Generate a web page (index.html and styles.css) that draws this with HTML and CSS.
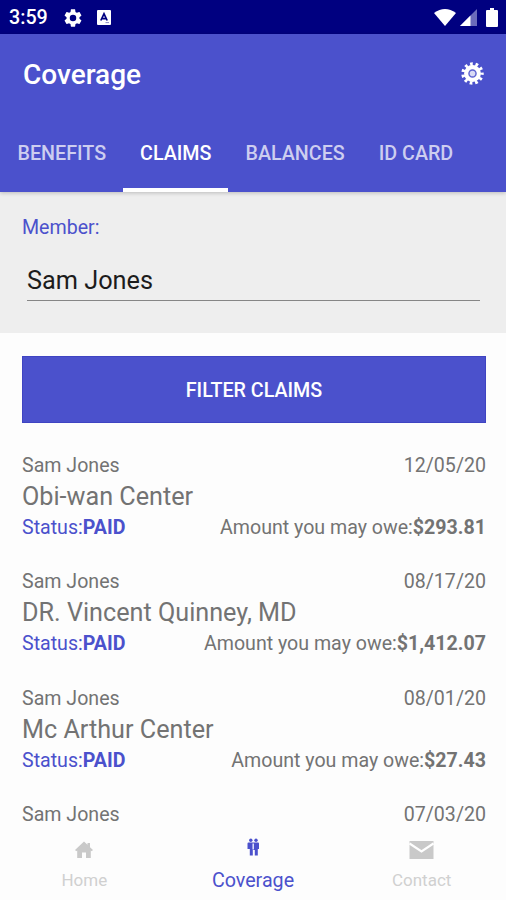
FILE: index.html
```html
<!DOCTYPE html>
<html lang="en">
<head>
<meta charset="utf-8">
<title>Coverage</title>
<link rel="stylesheet" href="styles.css">
</head>
<body>
<div class="app">
  <div class="status-bar">
    <span class="clock">3:59</span>
    <svg class="status-gear" viewBox="2 2 20 20"><path d="M19.14 12.94c.04-.3.06-.61.06-.94s-.02-.64-.07-.94l2.03-1.58c.18-.14.23-.41.12-.61l-1.92-3.32c-.12-.22-.37-.29-.59-.22l-2.39.96c-.5-.38-1.03-.7-1.62-.94l-.36-2.54c-.04-.24-.24-.41-.48-.41h-3.84c-.24 0-.43.17-.47.41l-.36 2.54c-.59.24-1.13.57-1.62.94l-2.39-.96c-.22-.08-.47 0-.59.22L2.74 8.87c-.12.21-.08.47.12.61l2.03 1.58c-.05.3-.09.63-.09.94s.02.64.07.94l-2.03 1.58c-.18.14-.23.41-.12.61l1.92 3.32c.12.22.37.29.59.22l2.39-.96c.5.38 1.03.7 1.62.94l.36 2.54c.05.24.24.41.48.41h3.84c.24 0 .44-.17.47-.41l.36-2.54c.59-.24 1.13-.56 1.62-.94l2.39.96c.22.08.47 0 .59-.22l1.92-3.32c.12-.22.07-.47-.12-.61zM12 15.6A3.6 3.6 0 1 1 12 8.4a3.6 3.6 0 0 1 0 7.2z" fill="#fff"/></svg>
    <svg class="status-app" viewBox="0 0 14 15"><rect width="14" height="15" rx="1" fill="#fff"/><path d="M3.8 10.5 7 3.8l3.2 6.7M5 8.6h4" fill="none" stroke="#000080" stroke-width="1.7"/><path d="M8.5 12.6h3.5" stroke="#8989c4" stroke-width="1"/></svg>
    <div class="signals">
      <svg class="wifi" viewBox="0 0 22 17"><path d="M0 4Q11-4 22 4L11 17Z" fill="#fff"/></svg>
      <svg class="cell" viewBox="0 0 17 17"><path d="M17 0v17H0Z" fill="#6b6bbb"/><path d="M10.500 6.500V17H0Z" fill="#fff"/></svg>
      <svg class="battery" viewBox="0 0 12 19"><path d="M4 0h4v2h3q1 0 1 1v15q0 1-1 1H1q-1 0-1-1V3q0-1 1-1h3Z" fill="#fff"/></svg>
    </div>
  </div>
  <header class="header">
    <div class="toolbar">
      <h1 class="title">Coverage</h1>
      <svg class="settings" viewBox="-12 -12 24 24">
        <circle r="8.800" fill="#fff"/>
        <circle r="9.900" fill="none" stroke="#fff" stroke-width="3.600" stroke-dasharray="2.800 2.855" stroke-dashoffset="1.400"/>
        <circle r="3.700" fill="#d9daf5" stroke="#5d62d1" stroke-width="1.500"/>
      </svg>
    </div>
    <nav class="tabs">
      <div class="tab">BENEFITS</div>
      <div class="tab tab-active">CLAIMS</div>
      <div class="tab">BALANCES</div>
      <div class="tab">ID CARD</div>
    </nav>
  </header>
  <section class="member">
    <div class="member-label">Member:</div>
    <div class="member-field">Sam Jones</div>
  </section>
  <main class="content">
    <div class="filter">FILTER CLAIMS</div>
    <div class="claim">
      <div class="row"><span>Sam Jones</span><span class="date">12/05/20</span></div>
      <div class="provider">Obi-wan Center</div>
      <div class="row"><span class="status">Status:<b>PAID</b></span><span class="amount">Amount you may owe:<b>$293.81</b></span></div>
    </div>
    <div class="claim">
      <div class="row"><span>Sam Jones</span><span class="date">08/17/20</span></div>
      <div class="provider">DR. Vincent Quinney, MD</div>
      <div class="row"><span class="status">Status:<b>PAID</b></span><span class="amount">Amount you may owe:<b>$1,412.07</b></span></div>
    </div>
    <div class="claim">
      <div class="row"><span>Sam Jones</span><span class="date">08/01/20</span></div>
      <div class="provider">Mc Arthur Center</div>
      <div class="row"><span class="status">Status:<b>PAID</b></span><span class="amount">Amount you may owe:<b>$27.43</b></span></div>
    </div>
    <div class="claim">
      <div class="row"><span>Sam Jones</span><span class="date">07/03/20</span></div>
    </div>
  </main>
  <nav class="bottom-nav">
    <div class="nav-item">
      <svg class="nav-icon" viewBox="0 0 24 24"><path d="M3 12 12 3.500 15.500 6.800V5H18v4.200L21 12l-1.300 1.200-.9-.8V20H14v-5.500h-4V20H5.200v-7.600l-.9.800Z" fill="#c9c9c9"/></svg>
      <span class="nav-label">Home</span>
    </div>
    <div class="nav-item nav-active">
      <svg class="nav-icon" viewBox="0 0 24 24"><g fill="#4b51cc"><circle cx="9.800" cy="2.200" r="1.700"/><circle cx="15" cy="2.200" r="1.700"/><path d="M7.500 4.500h9.500q1 0 1 1V11h-1.200v6.500h-3V12h-2v5.500h-3V11H6.500V5.500q0-1 1-1Z"/></g><path d="M12.200 5.500v6" stroke="#e4e5fb" stroke-width="1.500"/></svg>
      <span class="nav-label">Coverage</span>
    </div>
    <div class="nav-item">
      <svg class="nav-icon nav-mail" viewBox="0 0 25 24"><path d="M.5 3h24v18H.5Z" fill="#c9c9c9"/><path d="m.5 5.500 12 8 12-8" fill="none" stroke="#fff" stroke-width="2.200"/></svg>
      <span class="nav-label">Contact</span>
    </div>
  </nav>
</div>
</body>
</html>
```
FILE: styles.css
```css
* { box-sizing: border-box; }
body { margin: 0; background: #fdfdfd; font-family: Roboto, sans-serif; }
.app { width: 506px; height: 900px; display: flex; flex-direction: column; overflow: hidden; font-size: 19.6px; color: #737373; }
.status-bar { height: 34px; flex: none; background: #000080; color: #fff; display: flex; align-items: center; padding: 1px 8px 0 9px; }
.clock { font-size: 19.7px; font-weight: 500; width: 55px; line-height: 24px; padding-top: 1px; }
.status-gear { width: 18px; height: 18px; }
.status-app { width: 14px; height: 15px; margin-left: 15px; }
.signals { margin-left: auto; display: flex; align-items: center; }
.wifi { width: 22px; height: 17px; }
.cell { width: 17px; height: 17px; margin-left: 4px; }
.battery { width: 12px; height: 19px; margin-left: 9px; }
.header { height: 158px; flex: none; background: #4b51cc; display: flex; flex-direction: column; justify-content: space-between; box-shadow: 0 1px 4px rgba(0,0,0,.22); position: relative; }
.toolbar { height: 80px; display: flex; align-items: center; justify-content: space-between; padding: 0 22px 0 23px; }
.title { margin: 0; padding-top: 2px; color: #fff; font-size: 28px; font-weight: 500; line-height: 34px; }
.settings { width: 23px; height: 23px; margin-bottom: 1px; }
.tabs { display: flex; height: 68px; font-size: 19.7px; padding-left: .5px; }
.tab { padding: 18px 17px 0; font-weight: 500; line-height: 23px; color: #cdcef0; white-space: nowrap; }
.tab-active { color: #fff; border-bottom: 4px solid #fff; }
.member { height: 141px; flex: none; background: #eee; padding: 24px 26px 0 22px; }
.member-label { line-height: 23px; color: #4b51cc; }
.member-field { margin: 15px 0 0 5px; height: 47px; border-bottom: 1px solid #868686; color: #1c1c1c; font-size: 25.3px; line-height: 54px; }
.content { flex: 1; min-height: 0; overflow: hidden; padding: 23px 20px 0 22px; }
.filter { height: 67px; background: #4b51cc; border: 1px solid #3f44c2; color: #fff; font-size: 19.7px; font-weight: 500; text-align: center; line-height: 67px; margin-bottom: 31px; }
.claim { height: 116.3px; }
.row { display: flex; justify-content: space-between; line-height: 24px; white-space: nowrap; }
.provider { font-size: 25.2px; line-height: 38px; white-space: nowrap; }
.status { color: #4b51cc; }
b { font-weight: 700; }
.bottom-nav { height: 73px; flex: none; display: flex; background: #fdfdfd; }
.nav-item { flex: 1; display: flex; flex-direction: column; align-items: center; color: #d0d0d0; font-size: 17px; }
.nav-icon { width: 24px; height: 24px; margin-top: 11px; }
.nav-mail { width: 25px; }
.nav-label { line-height: 24px; margin-top: 6px; }
.nav-active { color: #4b51cc; font-size: 19.7px; }
.nav-active .nav-label { margin-top: 7px; }
```
